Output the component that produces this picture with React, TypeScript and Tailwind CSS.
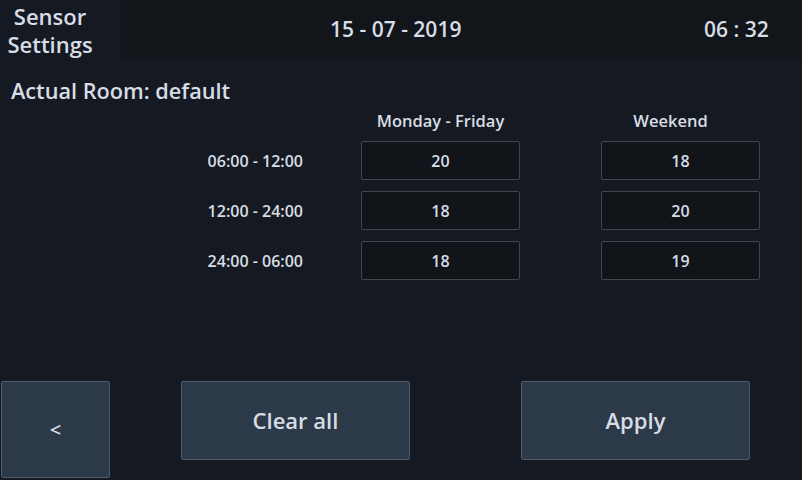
import React from "react";

const rows = [
  { label: "06:00 - 12:00", wk: "20", we: "18" },
  { label: "12:00 - 24:00", wk: "18", we: "20" },
  { label: "24:00 - 06:00", wk: "18", we: "19" },
];

function Cell({ v }: { v: string }) {
  return (
    <div className="w-[159px] h-[39px] bg-[#111418] border border-[#40464e] rounded-[2px] flex items-center justify-center text-[16px] font-semibold text-[#d8dde5]">
      {v}
    </div>
  );
}

export default function App() {
  return (
    <div
      className="w-[802px] h-[480px] bg-[#151a22] text-[#d8dde5] flex flex-col overflow-hidden"
      style={{ fontFamily: '"Open Sans", "Noto Sans", sans-serif' }}
    >
      <div className="h-[60px] flex shrink-0">
        <div className="w-[120px] pr-[20px] flex flex-col items-center justify-center text-[22px] font-semibold leading-[28px]">
          <span>Sensor</span>
          <span>Settings</span>
        </div>
        <div className="flex-1 bg-[#121519] flex items-center text-[21px] font-semibold">
          <span className="ml-[210px] w-[374px]">15 - 07 - 2019</span>
          <span>06 : 32</span>
        </div>
      </div>

      <div className="pt-[17px] pl-[11px] text-[21.7px] font-semibold leading-[28px]">
        Actual Room: default
      </div>

      <div className="mt-[6px] h-[20px] flex items-center text-[16.5px] font-semibold">
        <div className="ml-[361px] w-[159px] text-center">Monday - Friday</div>
        <div className="ml-[71px] w-[159px] text-center">Weekend</div>
      </div>

      <div className="mt-[10px] flex flex-col gap-[11px]">
        {rows.map((r) => (
          <div key={r.label} className="flex items-center">
            <div className="w-[303px] text-right text-[16px] font-semibold">{r.label}</div>
            <div className="ml-[58px]">
              <Cell v={r.wk} />
            </div>
            <div className="ml-[81px]">
              <Cell v={r.we} />
            </div>
          </div>
        ))}
      </div>

      <div className="mt-auto pb-[2px] flex items-start">
        <button className="ml-[1px] w-[109px] h-[97px] bg-[#2c3948] border border-[#4f5a66] rounded-[2px] flex items-center justify-center text-[20px] font-semibold text-[#d8dde5]">
          &lt;
        </button>
        <button className="ml-[71px] w-[229px] h-[79px] bg-[#2c3948] border border-[#4f5a66] rounded-[2px] flex items-center justify-center text-[22px] font-semibold text-[#d8dde5]">
          Clear all
        </button>
        <button className="ml-[111px] w-[229px] h-[79px] bg-[#2c3948] border border-[#4f5a66] rounded-[2px] flex items-center justify-center text-[22px] font-semibold text-[#d8dde5]">
          Apply
        </button>
      </div>
    </div>
  );
}
